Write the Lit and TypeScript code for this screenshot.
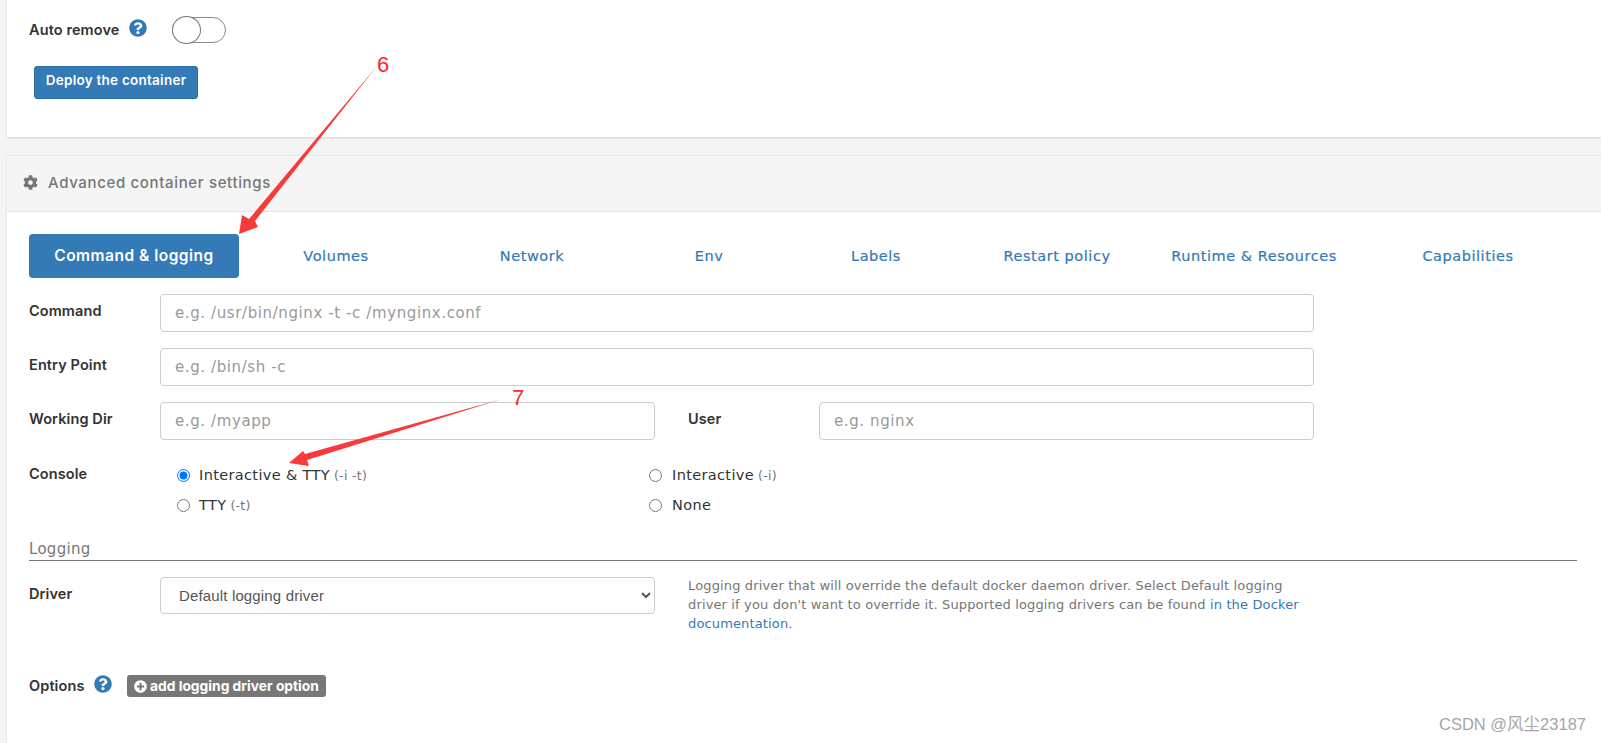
import { LitElement, html, css, svg } from 'lit';
import { customElement } from 'lit/decorators.js';

const QUESTION = 'M504 256c0 136.997-111.043 248-248 248S8 392.997 8 256C8 119.083 119.043 8 256 8s248 111.083 248 248zM262.655 90c-54.497 0-89.255 22.957-116.549 63.758-3.536 5.286-2.353 12.415 2.715 16.258l34.699 26.31c5.205 3.947 12.621 3.008 16.665-2.122 17.864-22.658 30.113-35.797 57.303-35.797 20.429 0 45.698 13.148 45.698 32.958 0 14.976-12.363 22.667-32.534 33.976C247.128 238.528 216 254.941 216 296v4c0 6.627 5.373 12 12 12h56c6.627 0 12-5.373 12-12v-1.333c0-28.462 83.186-29.647 83.186-106.667 0-58.002-60.165-102-116.531-102zM256 338c-25.365 0-46 20.635-46 46 0 25.364 20.635 46 46 46s46-20.636 46-46c0-25.365-20.635-46-46-46z';
const PLUS = 'M256 8C119 8 8 119 8 256s111 248 248 248 248-111 248-248S393 8 256 8zm144 276c0 6.6-5.4 12-12 12h-92v92c0 6.6-5.4 12-12 12h-56c-6.6 0-12-5.4-12-12v-92h-92c-6.6 0-12-5.4-12-12v-56c0-6.6 5.4-12 12-12h92v-92c0-6.6 5.4-12 12-12h56c6.6 0 12 5.4 12 12v92h92c6.6 0 12 5.4 12 12v56z';
const COG = 'M487.4 315.7l-42.6-24.6c4.3-23.2 4.3-47 0-70.2l42.6-24.6c4.9-2.8 7.1-8.6 5.5-14-11.1-35.6-30-67.8-54.7-94.6-3.8-4.1-10-5.1-14.8-2.3L380.8 110c-17.9-15.4-38.5-27.3-60.8-35.1V25.8c0-5.6-3.9-10.5-9.4-11.7-36.7-8.2-74.3-7.8-109.2 0-5.5 1.2-9.4 6.1-9.4 11.7V75c-22.2 7.9-42.8 19.8-60.8 35.1L88.7 85.5c-4.9-2.8-11-1.9-14.8 2.3-24.7 26.7-43.6 58.9-54.7 94.6-1.7 5.4.6 11.2 5.5 14L67.3 221c-4.3 23.2-4.3 47 0 70.2l-42.6 24.6c-4.9 2.8-7.1 8.6-5.5 14 11.1 35.6 30 67.8 54.7 94.6 3.8 4.1 10 5.1 14.8 2.3l42.6-24.6c17.9 15.4 38.5 27.3 60.8 35.1v49.2c0 5.6 3.9 10.5 9.4 11.7 36.7 8.2 74.3 7.8 109.2 0 5.5-1.2 9.4-6.1 9.4-11.7v-49.2c22.2-7.9 42.8-19.8 60.8-35.1l42.6 24.6c4.9 2.8 11 1.9 14.8-2.3 24.7-26.7 43.6-58.9 54.7-94.6 1.5-5.5-.7-11.3-5.6-14.1zM256 336c-44.1 0-80-35.9-80-80s35.9-80 80-80 80 35.9 80 80-35.9 80-80 80z';

const icon = (d: string, cls: string) =>
  html`<svg class=${cls} viewBox="0 0 512 512">${svg`<path d=${d}></path>`}</svg>`;

const TABS = ['Volumes', 'Network', 'Env', 'Labels', 'Restart policy', 'Runtime & Resources', 'Capabilities'];

@customElement('app-root')
export class AppRoot extends LitElement {
  static styles = css`
    :host {
      display: block;
      position: relative;
      height: 743px;
      overflow: hidden;
      background: #f4f4f4;
      padding-left: 7px;
      font-family: 'DejaVu Sans', 'Open Sans', sans-serif;
      font-size: 13.5px;
      color: #333;
    }
    .card {
      background: #fff;
      box-shadow: 0 1px 2px rgba(0, 0, 0, 0.14);
    }
    .top {
      height: 137px;
      padding: 16px 0 0 22px;
      box-sizing: border-box;
    }
    .auto {
      display: flex;
      align-items: center;
      height: 28px;
    }
    .auto label {
      font-weight: 600;
      width: 100px;
      margin-top: -1px;
      font-family: Inter, sans-serif;
      font-size: 14.5px;
      letter-spacing: 0.1px;
    }
    .help {
      width: 18px;
      height: 18px;
      fill: #337ab7;
      margin-top: -4px;
    }
    .toggle {
      position: relative;
      width: 54px;
      height: 26px;
      margin-left: 25px;
      box-sizing: border-box;
      border: 1px solid #8a8a8a;
      border-radius: 14px;
    }
    .toggle::before {
      content: '';
      position: absolute;
      left: -1px;
      top: -2px;
      width: 29px;
      height: 28px;
      box-sizing: border-box;
      border: 1px solid #777;
      border-radius: 50%;
      background: #fff;
    }
    .deploy {
      display: block;
      margin: 22px 0 0 5px;
      width: 164px;
      height: 33px;
      background: #337ab7;
      border: 1px solid #2e6da4;
      border-radius: 3px;
      color: #fff;
      font: 600 13.5px Inter, sans-serif;
      letter-spacing: 0.25px;
      padding: 0 0 5px;
    }
    .adv {
      margin-top: 18px;
      height: 620px;
    }
    .adv-head {
      display: flex;
      align-items: center;
      gap: 10px;
      height: 57px;
      padding: 0 0 2px 16px;
      box-sizing: border-box;
      background: #f5f5f5;
      border-top: 1px solid #e8e8e8;
      border-bottom: 1px solid #e6e6e6;
      color: #767676;
      font-family: Inter, sans-serif;
      font-size: 15px;
      font-weight: 500;
      letter-spacing: 0.65px;
    }
    .cog {
      width: 15px;
      height: 15px;
      fill: #767676;
    }
    .body {
      padding: 22px 24px 0 22px;
    }
    .tabs {
      display: grid;
      grid-template-columns: 210px 194px 198px 156px 178px 184px 210px 218px;
      height: 44px;
      margin-bottom: 16px;
    }
    .tab {
      display: flex;
      align-items: center;
      justify-content: center;
      color: #337ab7;
      font-size: 14.5px;
      letter-spacing: 0.55px;
      padding-bottom: 1px;
      -webkit-text-stroke: 0.2px #337ab7;
    }
    .tab.active {
      background: #337ab7;
      color: #fff;
      border-radius: 4px;
      font-family: Inter, sans-serif;
      font-weight: 600;
      font-size: 15.5px;
      letter-spacing: 0.5px;
      -webkit-text-stroke: 0;
    }
    .row {
      display: grid;
      grid-template-columns: 131px 1fr;
      align-items: center;
      width: 1285px;
      height: 38px;
      margin-bottom: 16px;
    }
    .row.split {
      grid-template-columns: 131px 495px 164px 1fr;
    }
    .row label,
    .console > label,
    .options label,
    .driver label {
      font-family: Inter, sans-serif;
      font-weight: 600;
      font-size: 14.5px;
      letter-spacing: 0.1px;
      color: #333;
      margin-top: -6px;
    }
    .row.split .user {
      padding-left: 33px;
    }
    input.text,
    select {
      width: 100%;
      height: 38px;
      box-sizing: border-box;
      background: #fff;
      border: 1px solid #ccc;
      border-radius: 4px;
      padding: 0 14px;
      color: #555;
      font: 15px 'DejaVu Sans', sans-serif;
      letter-spacing: 0.6px;
      outline: none;
    }
    input.text::placeholder {
      color: #999;
    }
    .console {
      display: grid;
      grid-template-columns: 131px 489px 1fr;
      grid-auto-rows: 30px;
      align-items: center;
      width: 1285px;
      margin-top: 20px;
    }
    .console > label {
      grid-row: 1 / span 2;
      align-self: start;
      margin-top: 5px;
    }
    .radio {
      display: flex;
      align-items: center;
      gap: 3px;
      padding-left: 17px;
      color: #333;
      font-size: 14.5px;
      letter-spacing: 0.35px;
    }
    .radio input {
      margin: 0 6px 0 0;
      width: 13px;
      height: 13px;
    }
    .radio small {
      color: #767676;
      font-size: 12.5px;
      letter-spacing: 0.3px;
      margin-left: 1px;
    }
    .radio.right {
      padding-left: 0;
    }
    .radio.right input {
      margin-right: 7px;
    }
    .section {
      margin-top: 18px;
      height: 23px;
      line-height: 22px;
      color: #767676;
      font-size: 15px;
      letter-spacing: 0.3px;
      border-bottom: 1px solid #777;
      box-sizing: border-box;
      width: 1548px;
    }
    .driver {
      display: grid;
      grid-template-columns: 131px 495px 1fr;
      width: 1285px;
      margin-top: 16px;
    }
    .driver label {
      margin-top: 0;
      line-height: 34px;
    }
    .driver select {
      font: 15px 'Liberation Sans', Arial, sans-serif;
      letter-spacing: 0.15px;
      padding-left: 14px;
      height: 37px;
    }
    .note {
      margin: -1px 0 0 33px;
      color: #767676;
      font-size: 13px;
      letter-spacing: 0.14px;
      line-height: 19px;
    }
    .note a {
      color: #337ab7;
      text-decoration: none;
    }
    .options {
      display: flex;
      align-items: center;
      margin-top: 40px;
      height: 24px;
    }
    .options label {
      margin-top: 0;
      width: 65px;
    }
    .options .help {
      margin-right: 15px;
      margin-top: -3px;
    }
    .add {
      display: flex;
      align-items: center;
      gap: 3px;
      height: 22px;
      width: 199px;
      margin-top: 2px;
      box-sizing: border-box;
      padding-left: 7px;
      background: #777;
      color: #fff;
      border-radius: 3px;
      font-family: Inter, sans-serif;
      font-weight: 700;
      font-size: 13.8px;
      white-space: nowrap;
    }
    .plus {
      width: 13px;
      height: 13px;
      fill: #fff;
    }
    .marks {
      position: absolute;
      inset: 0;
      width: 1601px;
      height: 743px;
      pointer-events: none;
    }
    .marks polygon {
      fill: #f93a3a;
    }
    .marks text {
      fill: #f62a2a;
      font-family: 'Liberation Sans', Arial, sans-serif;
      font-size: 22px;
    }
    .mark {
      position: absolute;
      right: 15px;
      top: 743px;
      margin-top: -32px;
      color: #a6a6a6;
      font: 16.5px 'Liberation Sans', 'Noto Sans CJK SC', sans-serif;
    }
  `;

  render() {
    return html`
      <div class="card top">
        <div class="auto">
          <label>Auto remove</label>
          ${icon(QUESTION, 'help')}
          <div class="toggle"></div>
        </div>
        <button class="deploy">Deploy the container</button>
      </div>

      <div class="card adv">
        <div class="adv-head">${icon(COG, 'cog')}<span>Advanced container settings</span></div>
        <div class="body">
          <div class="tabs">
            <div class="tab active">Command &amp; logging</div>
            ${TABS.map((t) => html`<div class="tab">${t}</div>`)}
          </div>

          <div class="row">
            <label>Command</label>
            <input class="text" placeholder="e.g. /usr/bin/nginx -t -c /mynginx.conf" />
          </div>
          <div class="row">
            <label>Entry Point</label>
            <input class="text" placeholder="e.g. /bin/sh -c" />
          </div>
          <div class="row split">
            <label>Working Dir</label>
            <input class="text" placeholder="e.g. /myapp" />
            <label class="user">User</label>
            <input class="text" placeholder="e.g. nginx" />
          </div>

          <div class="console">
            <label>Console</label>
            <div class="radio"><input type="radio" name="console" checked />Interactive &amp; TTY <small>(-i -t)</small></div>
            <div class="radio right"><input type="radio" name="console" />Interactive <small>(-i)</small></div>
            <div class="radio"><input type="radio" name="console" />TTY <small>(-t)</small></div>
            <div class="radio right"><input type="radio" name="console" />None</div>
          </div>

          <div class="section">Logging</div>
          <div class="driver">
            <label>Driver</label>
            <select><option>Default logging driver</option></select>
            <p class="note">
              Logging driver that will override the default docker daemon driver. Select Default logging
              driver if you don't want to override it. Supported logging drivers can be found
              <a href="#">in the Docker documentation</a>.
            </p>
          </div>
          <div class="options">
            <label>Options</label>
            ${icon(QUESTION, 'help')}
            <div class="add">${icon(PLUS, 'plus')}add logging driver option</div>
          </div>
        </div>
      </div>

      <svg class="marks" viewBox="0 0 1601 743">
        <polygon points="377,66 255,221 258,227 239,234 242,215 249,219"></polygon>
        <text x="377" y="72">6</text>
        <polygon points="502,399 305,454 303,451 289,463 309,466 307,460"></polygon>
        <text x="512" y="405">7</text>
      </svg>
      <div class="mark">CSDN @风尘23187</div>
    `;
  }
}
